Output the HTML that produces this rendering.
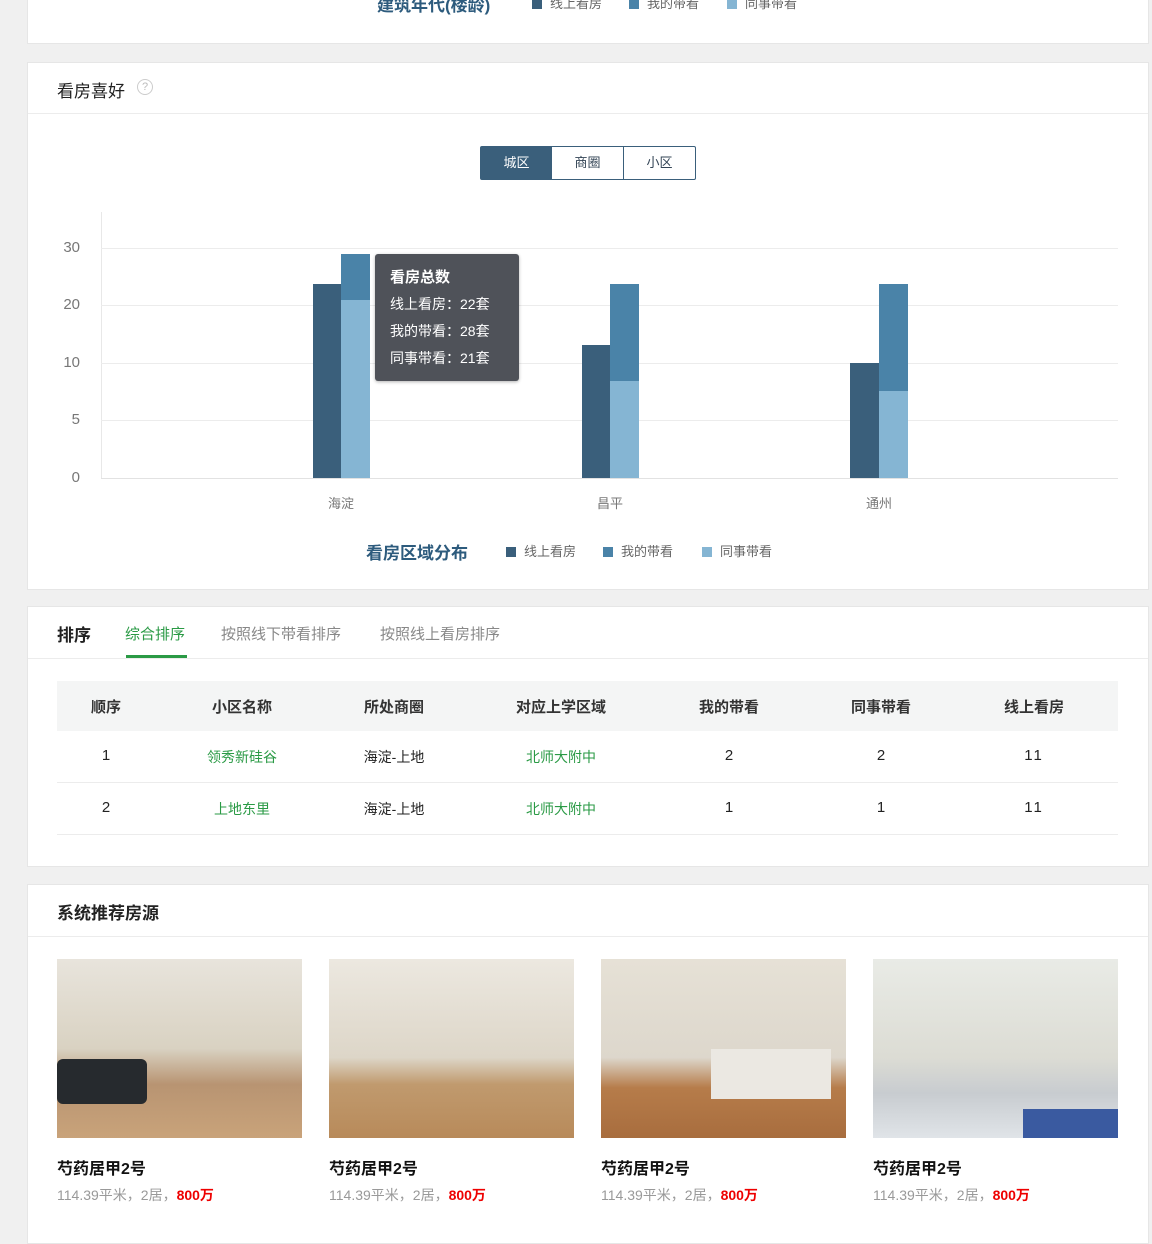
<!DOCTYPE html><html><head><meta charset="utf-8"><style>
*{margin:0;padding:0;box-sizing:border-box}
body{width:1152px;height:1232px;background:#f0f0f0;position:relative;overflow:hidden;font-family:"Liberation Sans","Noto Sans CJK SC",sans-serif;color:#333}
.a{position:absolute}
.card{position:absolute;left:27px;width:1122px;background:#fff;border:1px solid #e6e6e6}
.t{font-size:17px;color:#222}
.g{background:#ececec;height:1px}
.c{text-align:center;transform:translateX(-50%)}
.img{position:absolute;top:959px;width:245px;height:179px}
.n{font-size:16px;color:#111;font-weight:bold}
.d{font-size:14px;color:#999}
.d b{color:#e00;font-weight:bold}
.lg{position:absolute;font-size:13px;color:#666;white-space:nowrap}
.lg i{display:inline-block;width:10px;height:10px;margin-right:8px;vertical-align:-1px}
</style></head><body>
<div class="card" style="top:-2px;height:46px"></div>
<div class="a" style="left:377px;top:-9px;font-size:17px;color:#2d5b7d;font-weight:bold">建筑年代(楼龄)</div>
<div class="lg" style="left:532px;top:-7px"><i style="background:#3a5f7b"></i>线上看房</div>
<div class="lg" style="left:629px;top:-7px"><i style="background:#4a83a8"></i>我的带看</div>
<div class="lg" style="left:727px;top:-7px"><i style="background:#85b5d3"></i>同事带看</div>

<div class="card" style="top:62px;height:528px"></div>
<div class="a t" style="left:57px;top:77px">看房喜好</div>
<div class="a" style="left:137px;top:79px;width:16px;height:16px;border:1px solid #ccc;border-radius:50%;font-size:11px;color:#bbb;text-align:center;line-height:14px">?</div>
<div class="a g" style="left:28px;top:113px;width:1120px"></div>
<div class="a" style="left:480px;top:146px;width:216px;height:34px;border:1px solid #3a5f7b;border-radius:2px;display:flex;font-size:13px">
<div style="width:71px;background:#3a5f7b;color:#fff;text-align:center;line-height:32px">城区</div>
<div style="width:72px;border-right:1px solid #3a5f7b;text-align:center;line-height:32px;color:#345">商圈</div>
<div style="flex:1;text-align:center;line-height:32px;color:#345">小区</div></div>
<div class="a" style="left:101px;top:212px;width:1px;height:267px;background:#e8e8e8"></div>
<div class="a g" style="left:101px;top:248px;width:1017px"></div>
<div class="a g" style="left:101px;top:305px;width:1017px"></div>
<div class="a g" style="left:101px;top:363px;width:1017px"></div>
<div class="a g" style="left:101px;top:420px;width:1017px"></div>
<div class="a g" style="left:101px;top:478px;width:1017px;background:#e2e2e2"></div>
<div class="a" style="left:50px;top:239px;width:30px;text-align:right;font-size:15px;color:#777;line-height:18px">30</div>
<div class="a" style="left:50px;top:296px;width:30px;text-align:right;font-size:15px;color:#777;line-height:18px">20</div>
<div class="a" style="left:50px;top:354px;width:30px;text-align:right;font-size:15px;color:#777;line-height:18px">10</div>
<div class="a" style="left:50px;top:411px;width:30px;text-align:right;font-size:15px;color:#777;line-height:18px">5</div>
<div class="a" style="left:50px;top:469px;width:30px;text-align:right;font-size:15px;color:#777;line-height:18px">0</div>
<div class="a" style="left:313px;top:284px;width:28px;height:194px;background:#3a5f7b"></div>
<div class="a" style="left:341px;top:254px;width:29px;height:46px;background:#4a83a8"></div>
<div class="a" style="left:341px;top:300px;width:29px;height:178px;background:#85b5d3"></div>
<div class="a" style="left:582px;top:345px;width:28px;height:133px;background:#3a5f7b"></div>
<div class="a" style="left:610px;top:284px;width:29px;height:97px;background:#4a83a8"></div>
<div class="a" style="left:610px;top:381px;width:29px;height:97px;background:#85b5d3"></div>
<div class="a" style="left:850px;top:363px;width:29px;height:115px;background:#3a5f7b"></div>
<div class="a" style="left:879px;top:284px;width:29px;height:107px;background:#4a83a8"></div>
<div class="a" style="left:879px;top:391px;width:29px;height:87px;background:#85b5d3"></div>
<div class="a c" style="left:341px;top:493px;font-size:13px;color:#777">海淀</div>
<div class="a c" style="left:610px;top:493px;font-size:13px;color:#777">昌平</div>
<div class="a c" style="left:879px;top:493px;font-size:13px;color:#777">通州</div>
<div class="a" style="left:375px;top:254px;width:144px;height:127px;background:#4f5259;border-radius:3px;color:#fff;padding:14px 0 0 15px;box-shadow:0 1px 3px rgba(0,0,0,.3)">
<div style="font-size:15px;font-weight:bold;line-height:20px">看房总数</div>
<div style="font-size:14px;line-height:27px;margin-top:3px">线上看房：22套<br>我的带看：28套<br>同事带看：21套</div></div>
<div class="a" style="left:366px;top:539px;font-size:17px;color:#2d5b7d;font-weight:bold">看房区域分布</div>
<div class="lg" style="left:506px;top:541px"><i style="background:#3a5f7b"></i>线上看房</div>
<div class="lg" style="left:603px;top:541px"><i style="background:#4a83a8"></i>我的带看</div>
<div class="lg" style="left:702px;top:541px"><i style="background:#85b5d3"></i>同事带看</div>

<div class="card" style="top:606px;height:261px"></div>
<div class="a t" style="left:57px;top:621px;font-weight:bold">排序</div>
<div class="a" style="left:125px;top:623px;font-size:15px;color:#2a9a45">综合排序</div>
<div class="a" style="left:126px;top:655px;width:61px;height:3px;background:#2a9a45"></div>
<div class="a" style="left:221px;top:623px;font-size:15px;color:#888">按照线下带看排序</div>
<div class="a" style="left:380px;top:623px;font-size:15px;color:#888">按照线上看房排序</div>
<div class="a g" style="left:28px;top:658px;width:1120px"></div>
<div class="a" style="left:57px;top:681px;width:1061px;height:50px;background:#f4f5f5"></div>
<div class="a g" style="left:57px;top:782px;width:1061px"></div>
<div class="a g" style="left:57px;top:834px;width:1061px"></div>
<div style="font-size:15px;color:#333;font-weight:bold">
<div class="a c" style="left:106px;top:696px">顺序</div><div class="a c" style="left:242px;top:696px">小区名称</div><div class="a c" style="left:394px;top:696px">所处商圈</div><div class="a c" style="left:561px;top:696px">对应上学区域</div><div class="a c" style="left:729px;top:696px">我的带看</div><div class="a c" style="left:881px;top:696px">同事带看</div><div class="a c" style="left:1034px;top:696px">线上看房</div></div>
<div style="font-size:14px;color:#222">
<div class="a c" style="left:106px;top:747px;font-size:15px">1</div><div class="a c" style="left:242px;top:747px;color:#2a9a45">领秀新硅谷</div><div class="a c" style="left:394px;top:747px">海淀-上地</div><div class="a c" style="left:561px;top:747px;color:#2a9a45">北师大附中</div><div class="a c" style="left:729px;top:747px;font-size:15px">2</div><div class="a c" style="left:881px;top:747px;font-size:15px">2</div><div class="a c" style="left:1034px;top:747px;font-size:15px;letter-spacing:2px">11</div>
<div class="a c" style="left:106px;top:799px;font-size:15px">2</div><div class="a c" style="left:242px;top:799px;color:#2a9a45">上地东里</div><div class="a c" style="left:394px;top:799px">海淀-上地</div><div class="a c" style="left:561px;top:799px;color:#2a9a45">北师大附中</div><div class="a c" style="left:729px;top:799px;font-size:15px">1</div><div class="a c" style="left:881px;top:799px;font-size:15px">1</div><div class="a c" style="left:1034px;top:799px;font-size:15px;letter-spacing:2px">11</div></div>

<div class="card" style="top:884px;height:360px"></div>
<div class="a t" style="left:57px;top:899px;font-weight:bold">系统推荐房源</div>
<div class="a g" style="left:28px;top:936px;width:1120px"></div>
<div class="img" style="left:57px;background:linear-gradient(#e8e4dc 0%,#d9d2c2 50%,#b89472 70%,#c9a37a 100%)"><div class="a" style="left:0;top:100px;width:90px;height:45px;background:#262a2e;border-radius:6px"></div></div>
<div class="img" style="left:329px;background:linear-gradient(#ece8e0 0%,#ddd6c8 55%,#c09a6e 70%,#b88a5a 100%)"></div>
<div class="img" style="left:601px;background:linear-gradient(#e6e1d6 0%,#ddd7cc 55%,#b67c4a 72%,#a86d3e 100%)"><div class="a" style="left:110px;top:90px;width:120px;height:50px;background:#ebe8e2"></div></div>
<div class="img" style="left:873px;background:linear-gradient(#e9ebe6 0%,#dcdcd4 55%,#c8ccd0 75%,#e0e4e8 100%)"><div class="a" style="left:150px;top:150px;width:95px;height:29px;background:#3a5aa0"></div></div>
<div class="a n" style="left:57px;top:1155px">芍药居甲2号</div><div class="a d" style="left:57px;top:1185px">114.39平米，2居，<b>800万</b></div>
<div class="a n" style="left:329px;top:1155px">芍药居甲2号</div><div class="a d" style="left:329px;top:1185px">114.39平米，2居，<b>800万</b></div>
<div class="a n" style="left:601px;top:1155px">芍药居甲2号</div><div class="a d" style="left:601px;top:1185px">114.39平米，2居，<b>800万</b></div>
<div class="a n" style="left:873px;top:1155px">芍药居甲2号</div><div class="a d" style="left:873px;top:1185px">114.39平米，2居，<b>800万</b></div>
</body></html>
